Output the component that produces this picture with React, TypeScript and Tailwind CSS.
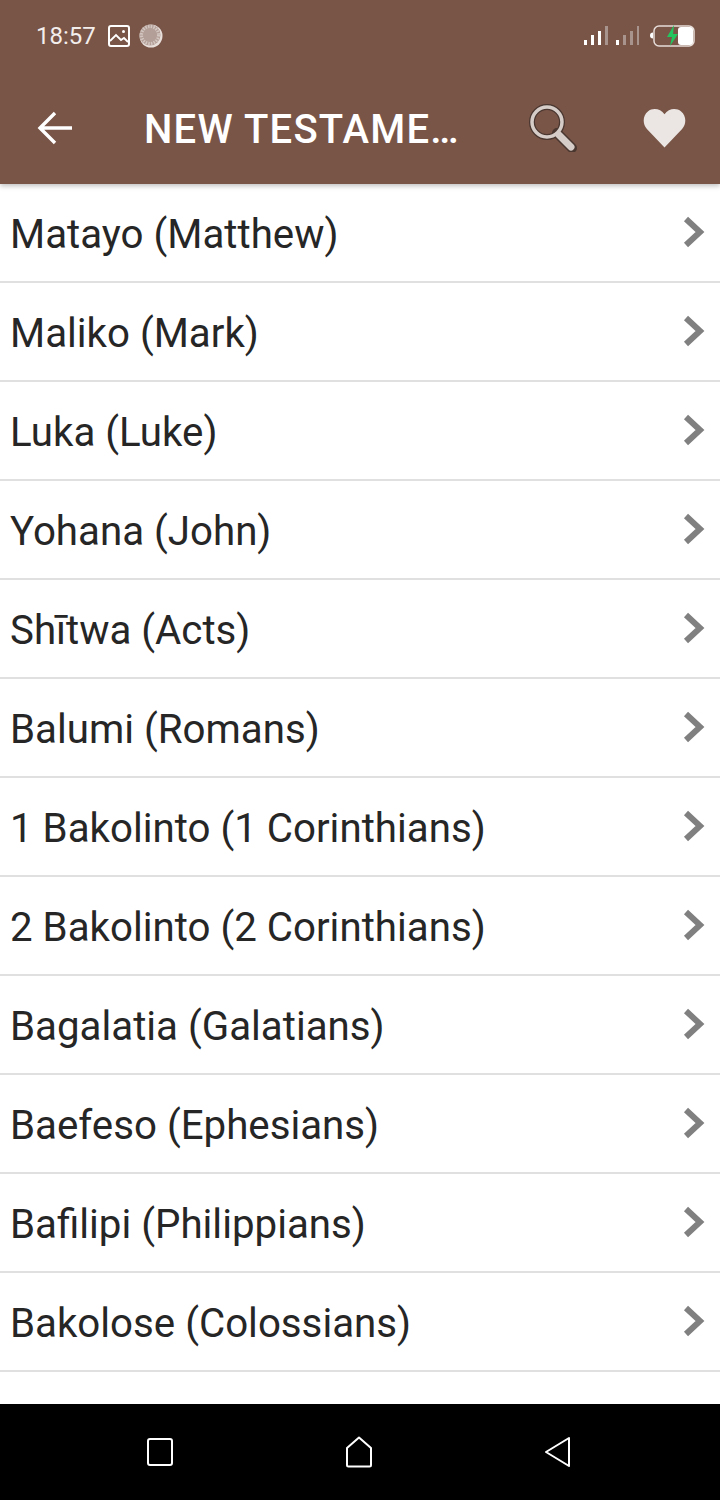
const books = [
  'Matayo (Matthew)',
  'Maliko (Mark)',
  'Luka (Luke)',
  'Yohana (John)',
  'Shītwa (Acts)',
  'Balumi (Romans)',
  '1 Bakolinto (1 Corinthians)',
  '2 Bakolinto (2 Corinthians)',
  'Bagalatia (Galatians)',
  'Baefeso (Ephesians)',
  'Bafilipi (Philippians)',
  'Bakolose (Colossians)',
];

const StatusBar = () => (
  <div className="flex h-[72px] items-center justify-between pl-[36px] pr-[25px]">
    <div className="flex items-center">
      <span className="text-[24px] text-[#f3eeec]">18:57</span>
      <svg className="ml-[11px]" width="24" height="24" viewBox="0 0 24 24" fill="none">
        <rect x="2" y="2" width="20" height="20" rx="2" stroke="#fff" strokeWidth="2" />
        <path d="M3 17l6-6 5 5 3-2 4 4" stroke="#fff" strokeWidth="1.8" />
        <circle cx="16.5" cy="7.5" r="1.5" fill="#fff" />
      </svg>
      <svg className="ml-[8px]" width="24" height="24" viewBox="0 0 24 24">
        <circle cx="12" cy="12" r="11.5" fill="#e8dfdb" />
        <circle cx="11" cy="11" r="10.5" fill="#b39f98" />
        <circle cx="11" cy="11" r="8.5" fill="none" stroke="#d4c7c2" strokeWidth="3" strokeDasharray="1.5 1.2" />
      </svg>
    </div>
    <div className="flex items-center">
      <svg width="56" height="20" viewBox="0 0 56 20">
        <rect x="1" y="14" width="3" height="5" fill="#fff" />
        <rect x="8" y="9" width="3" height="10" fill="#fff" />
        <rect x="15" y="5" width="3" height="14" fill="#fff" />
        <rect x="22" y="0" width="3" height="19" fill="#a8948c" />
        <rect x="33" y="14" width="3" height="5" fill="#fff" />
        <rect x="40" y="9" width="3" height="10" fill="#a8948c" />
        <rect x="47" y="5" width="3" height="14" fill="#a8948c" />
        <rect x="54" y="0" width="2" height="19" fill="#a8948c" />
      </svg>
      <svg className="ml-[10px]" width="46" height="22" viewBox="0 0 46 22">
        <path d="M4 7.5a3 3 0 0 0 0 6z" fill="#fff" />
        <rect x="5" y="1" width="40" height="20" rx="5" fill="none" stroke="#e6dcd8" strokeWidth="1.5" />
        <rect x="29" y="2" width="15" height="18" rx="3" fill="#fff" />
        <path d="M25 0l-7 12h5l-2 9 8-12h-5z" fill="#22c55e" />
      </svg>
    </div>
  </div>
);

const Toolbar = () => (
  <div className="flex h-[112px] items-center">
    <svg className="ml-[37px] mr-[71px] shrink-0" width="36" height="36" viewBox="0 0 36 36" fill="none">
      <path d="M35 18H4M18 3L3 18l15 15" stroke="#fff" strokeWidth="3.4" />
    </svg>
    <div className="w-[314px] whitespace-nowrap pt-[4px] text-[40px] font-medium tracking-[1.2px] text-white">NEW TESTAME…</div>
    <svg className="ml-[71px] shrink-0" width="48" height="48" viewBox="0 0 48 48" fill="none">
      <path d="M28 29l15 15" stroke="#4a3730" strokeWidth="10" strokeLinecap="round" />
      <circle cx="18" cy="18" r="15" stroke="#4a3730" strokeWidth="6" />
      <path d="M30 31l12 12" stroke="#d6cdc9" strokeWidth="7" strokeLinecap="round" />
      <circle cx="18" cy="18" r="15" stroke="#d6cdc9" strokeWidth="3.5" />
    </svg>
    <svg className="ml-[66px] shrink-0" width="43" height="40" viewBox="0 0 44 40">
      <path d="M22 40L4 21C-1 15 0 7 5 3c5-4 13-3 17 3 4-6 12-7 17-3 5 4 6 12 1 18z" fill="#ebe6e3" />
    </svg>
  </div>
);

const Row = ({ title }: { title: string }) => (
  <div className="flex h-[99px] shrink-0 items-center justify-between border-b-2 border-[#e0e0e0] pl-[10px] pr-[14px]">
    <span className="pt-[5px] text-[40.25px] text-[#262626]">{title}</span>
    <svg className="mb-[2px]" width="24" height="32" viewBox="0 0 24 32" fill="none">
      <path d="M4 3l14 13L4 29" stroke="#808080" strokeWidth="6" />
    </svg>
  </div>
);

export default function App() {
  return (
    <div className="flex h-[1500px] w-[720px] flex-col overflow-hidden bg-white font-['Roboto',sans-serif]">
      <header className="relative z-10 h-[184px] shrink-0 bg-[#795548] shadow-[0_2px_5px_rgba(0,0,0,0.25)]">
        <StatusBar />
        <Toolbar />
      </header>
      <main className="flex flex-1 flex-col overflow-hidden">
        {books.map((b) => (
          <Row key={b} title={b} />
        ))}
      </main>
      <nav className="flex h-[96px] shrink-0 items-center bg-black pl-[147px]">
        <svg width="26" height="28" viewBox="0 0 26 28" fill="none">
          <rect x="1" y="1" width="24" height="26" rx="2" stroke="#fff" strokeWidth="2" />
        </svg>
        <svg className="ml-[172px]" width="28" height="32" viewBox="0 0 28 32" fill="none">
          <path d="M14 1.5L2 12v17a1.5 1.5 0 0 0 1.5 1.5h21A1.5 1.5 0 0 0 26 29V12z" stroke="#fff" strokeWidth="2" strokeLinejoin="round" />
        </svg>
        <svg className="ml-[171px]" width="28" height="32" viewBox="0 0 28 32" fill="none">
          <path d="M25 2L2 16l23 14z" stroke="#fff" strokeWidth="2" strokeLinejoin="round" />
        </svg>
      </nav>
    </div>
  );
}
